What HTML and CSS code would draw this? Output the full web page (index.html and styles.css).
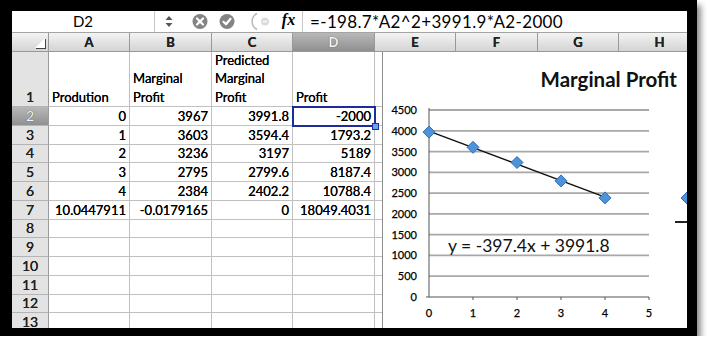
FILE: index.html
```html
<!DOCTYPE html>
<html lang="en">
<head>
<meta charset="UTF-8" />
<title>Marginal Profit</title>
<link rel="stylesheet" href="styles.css">
</head>
<body>
<div class="frame">
  <!-- Formula bar -->
  <div class="formula-bar">
    <div class="name-box">D2</div>
    <div class="spinner">
      <svg width="8" height="13" viewBox="0 0 8 13">
        <path d="M4 1 L7.5 5 L0.5 5 Z" fill="#555"/>
        <path d="M4 12 L7.5 8 L0.5 8 Z" fill="#555"/>
      </svg>
    </div>
    <div class="fb-buttons">
      <svg width="93" height="21" viewBox="0 0 93 21">
        <circle cx="18" cy="10.5" r="7.5" fill="#848484"/>
        <path d="M15 7.5 L21 13.5 M21 7.5 L15 13.5" stroke="#fff" stroke-width="2.2" stroke-linecap="round"/>
        <circle cx="45" cy="10.5" r="7.5" fill="#848484"/>
        <path d="M41.5 10.8 L44 13.2 L48.5 7.8" stroke="#fff" stroke-width="2.2" fill="none" stroke-linecap="round" stroke-linejoin="round"/>
        <path d="M75 2.5 A9 9 0 0 0 75 18.5" stroke="#b8b8b8" stroke-width="1.5" fill="none"/>
        <circle cx="83" cy="10.5" r="4" fill="#dcdcdc"/>
        <path d="M81 10.5 L85 10.5" stroke="#fff" stroke-width="1.2"/>
      </svg>
    </div>
    <div class="fx">fx</div>
    <div class="formula">=-198.7*A2^2+3991.9*A2-2000</div>
  </div>

  <!-- Sheet -->
  <div class="sheet">
    <div class="grid" id="grid"></div>

    <!-- Chart lies over columns E..H -->
    <div class="chart">
      <svg width="304" height="276" viewBox="0 0 304 276">
        <text class="chart-title" x="294" y="35" text-anchor="end">Marginal Profit</text>

        <g stroke="#a8a8a8" stroke-width="1.8">
          <line x1="46" y1="58" x2="266" y2="58"/>
          <line x1="46" y1="78.8" x2="266" y2="78.8"/>
          <line x1="46" y1="99.6" x2="266" y2="99.6"/>
          <line x1="46" y1="120.3" x2="266" y2="120.3"/>
          <line x1="46" y1="141.1" x2="266" y2="141.1"/>
          <line x1="46" y1="161.9" x2="266" y2="161.9"/>
          <line x1="46" y1="182.7" x2="266" y2="182.7"/>
          <line x1="46" y1="203.4" x2="266" y2="203.4"/>
          <line x1="46" y1="224.2" x2="266" y2="224.2"/>
        </g>
        <g stroke="#555" stroke-width="1">
          <line x1="46" y1="56" x2="46" y2="245"/>
          <line x1="43" y1="245" x2="266" y2="245"/>
          <line x1="90" y1="245" x2="90" y2="248"/>
          <line x1="134" y1="245" x2="134" y2="248"/>
          <line x1="178" y1="245" x2="178" y2="248"/>
          <line x1="222" y1="245" x2="222" y2="248"/>
          <line x1="266" y1="245" x2="266" y2="248"/>
        </g>

        <g class="axis-label" text-anchor="end">
          <text x="34" y="62">4500</text>
          <text x="34" y="82.8">4000</text>
          <text x="34" y="103.6">3500</text>
          <text x="34" y="124.3">3000</text>
          <text x="34" y="145.1">2500</text>
          <text x="34" y="165.9">2000</text>
          <text x="34" y="186.7">1500</text>
          <text x="34" y="207.4">1000</text>
          <text x="34" y="228.2">500</text>
          <text x="34" y="249">0</text>
        </g>
        <g class="axis-label" text-anchor="middle">
          <text x="46" y="265">0</text>
          <text x="90" y="265">1</text>
          <text x="134" y="265">2</text>
          <text x="178" y="265">3</text>
          <text x="222" y="265">4</text>
          <text x="266" y="265">5</text>
        </g>

        <!-- trendline -->
        <line x1="46" y1="79.1" x2="222" y2="145.2" stroke="#111" stroke-width="1.4"/>

        <g fill="#4e93d9" stroke="#2d6db3" stroke-width="1">
          <path d="M46 74.1 L52 80.1 L46 86.1 L40 80.1 Z"/>
          <path d="M90 89.3 L96 95.3 L90 101.3 L84 95.3 Z"/>
          <path d="M134 104.5 L140 110.5 L134 116.5 L128 110.5 Z"/>
          <path d="M178 122.9 L184 128.9 L178 134.9 L172 128.9 Z"/>
          <path d="M222 139.9 L228 145.9 L222 151.9 L216 145.9 Z"/>
          <!-- legend, cut off -->
          <path d="M304 140 L310 146 L304 152 L298 146 Z"/>
        </g>
        <line x1="292" y1="170" x2="310" y2="170" stroke="#222" stroke-width="2"/>

        <text class="equation" x="65" y="200">y = -397.4x + 3991.8</text>
      </svg>
    </div>
  </div>
</div>

<script>
  // Sheet data, rows 1..7
  const data = [
    [['Prodution'], ['Marginal', 'Profit'], ['Predicted', 'Marginal', 'Profit'], ['Profit']],
    ['0', '3967', '3991.8', '-2000'],
    ['1', '3603', '3594.4', '1793.2'],
    ['2', '3236', '3197', '5189'],
    ['3', '2795', '2799.6', '8187.4'],
    ['4', '2384', '2402.2', '10788.4'],
    ['10.0447911', '-0.0179165', '0', '18049.4031']
  ];
  const cols = ['A', 'B', 'C', 'D', 'E', 'F', 'G', 'H'];
  const grid = document.getElementById('grid');

  function cell(cls, html) {
    const d = document.createElement('div');
    d.className = 'cell ' + cls;
    d.innerHTML = html;
    grid.appendChild(d);
    return d;
  }

  // Column headers
  cell('corner', '');
  cols.forEach(c => cell('ch' + (c === 'D' ? ' sel-head' : ''), c));

  // Rows
  for (let r = 1; r <= 13; r++) {
    cell('rh' + (r === 2 ? ' sel-head' : ''), r);
    cols.forEach((c, i) => {
      const row = data[r - 1];
      const v = row ? row[i] : undefined;
      if (r === 1) {
        cell('text', v ? '<span>' + v.join('<br>') + '</span>' : '');
      } else {
        const d = cell('num', v === undefined ? '' : v);
        if (r === 2 && c === 'D') d.classList.add('active');
      }
    });
  }
</script>
</body>
</html>
```

FILE: styles.css
```css
body {
  margin: 0;
  background: #fff;
  font-family: Lato, "Open Sans", sans-serif;
  color: #000;
}
.frame {
  width: 675px;
  height: 317px;
  border-style: solid;
  border-color: #000;
  border-width: 11px 10px 8px 12px;
  box-shadow: 4px 5px 6px rgba(0,0,0,0.45);
  overflow: hidden;
  background: #fff;
}
/* Formula bar */
.formula-bar {
  display: flex;
  align-items: center;
  height: 21px;
  border-bottom: 1px solid #a3a3a3;
  background: #fff;
}
.name-box {
  width: 142px;
  height: 100%;
  line-height: 21px;
  text-align: center;
  font-size: 15px;
  border-right: 1px solid #c8c8c8;
}
.spinner {
  width: 27px;
  display: flex;
  justify-content: center;
}
.fb-buttons {
  width: 93px;
  display: flex;
}
.fx {
  width: 27px;
  height: 100%;
  line-height: 21px;
  text-align: center;
  font: italic bold 16px "Liberation Serif", serif;
  border-right: 1px solid #c8c8c8;
}
.formula {
  padding-left: 7px;
  font-size: 17px;
  letter-spacing: 0.35px;
  white-space: nowrap;
}
/* Sheet grid */
.sheet {
  position: relative;
}
.grid {
  display: grid;
  grid-template-columns: 37px 81px 82px 81px 82px 81px 82px 81px 82px;
  grid-template-rows: 19px 55px;
  grid-auto-rows: 18.75px;
}
.cell {
  box-sizing: border-box;
  display: flex;
  align-items: center;
  padding: 0 3px;
  border-right: 1px solid #c0c0c0;
  border-bottom: 1px solid #c0c0c0;
  font-size: 13px;
  text-shadow: 0 0 0.6px #000;
  white-space: nowrap;
  overflow: hidden;
}
.corner {
  position: relative;
  background: linear-gradient(#f3f3f3, #d4d4d4);
  border-color: #999;
}
.corner::after {
  content: '';
  position: absolute;
  right: 3px;
  bottom: 3px;
  border-left: 10px solid transparent;
  border-bottom: 10px solid #fff;
  box-shadow: 1px 1px 0 #444;
}
.ch {
  justify-content: center;
  background: linear-gradient(#f3f3f3, #d4d4d4);
  border-color: #999;
  font-weight: bold;
  font-size: 13px;
  color: #222;
}
.rh {
  justify-content: center;
  align-items: flex-end;
  line-height: 18px;
  background: #e3e3e3;
  border-right-color: #9a9a9a;
  border-bottom-color: #b4b4b4;
  font-size: 14px;
  color: #222;
}
.sel-head {
  background: linear-gradient(#b8b8b8, #909090);
  color: #f4f4f4;
  text-shadow: 0 0 1px #333;
}
.text {
  align-items: flex-end;
  line-height: 18.5px;
}
.num {
  justify-content: flex-end;
}
.active {
  position: relative;
  overflow: visible;
  z-index: 1;
}
.active::after {
  content: '';
  position: absolute;
  left: -1px;
  top: -1px;
  right: -2px;
  bottom: -2px;
  border: 2px solid #1e2b9b;
}
.active::before {
  content: '';
  position: absolute;
  right: -5px;
  bottom: -5px;
  width: 5px;
  height: 5px;
  background: #6fa0e8;
  border: 1px solid #1e2b9b;
  z-index: 2;
}
/* Chart */
.chart {
  position: absolute;
  left: 370px;
  top: 19px;
  width: 304px;
  height: 276px;
  background: #fff;
  border-left: 1px solid #8c8c8c;
}
.chart svg {
  display: block;
}
.chart-title {
  font: bold 20.5px Lato, sans-serif;
  fill: #111;
}
.axis-label {
  font: 11px Lato, sans-serif;
  fill: #000;
  stroke: #000;
  stroke-width: 0.25px;
}
.equation {
  font: 17.5px Lato, sans-serif;
  fill: #111;
}
```
